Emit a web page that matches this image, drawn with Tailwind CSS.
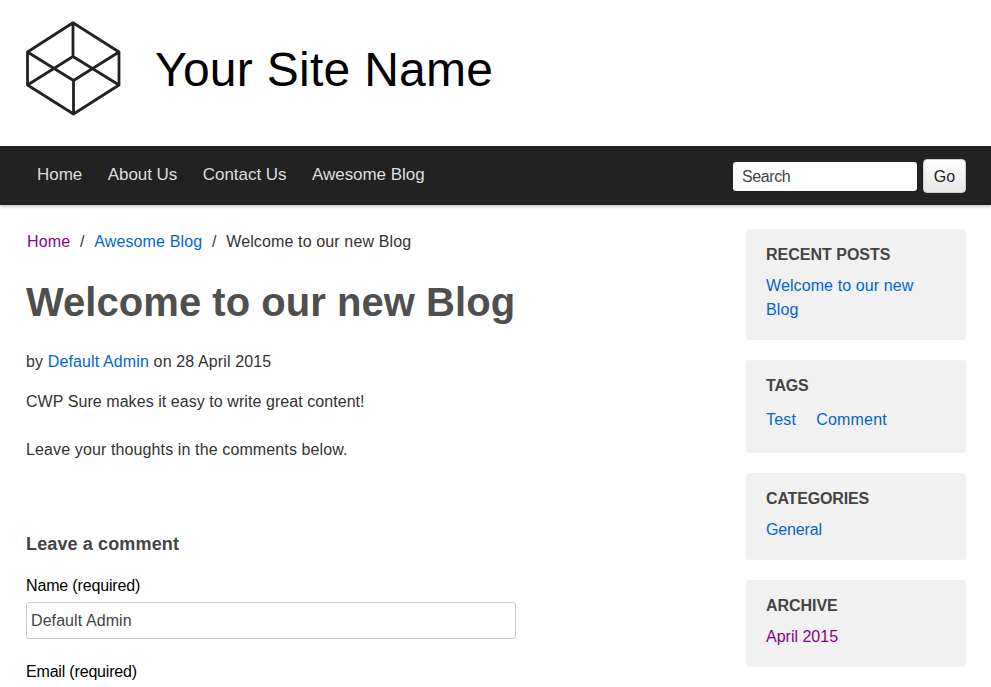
<!DOCTYPE html>
<html lang="en">
<head>
<meta charset="utf-8">
<title>Welcome to our new Blog</title>
<script src="https://cdn.jsdelivr.net/npm/@tailwindcss/browser@4"></script>
</head>
<body class="h-[687px] overflow-hidden bg-white font-['Liberation_Sans',Arial,sans-serif] text-base leading-6 text-[#333]">
<header class="flex h-[146px] items-start pl-[25px]">
  <svg class="mt-5 h-[97px] w-[97px] shrink-0" viewBox="0 0 97 97" fill="none" stroke="#222" stroke-width="2.8" stroke-linejoin="round">
    <path d="M48 2.800 94 32V65L48.500 94 2.500 65V32ZM48 3V36.500L2.500 65M48 36.500 94 65M2.500 32 48.500 60.500V94M48.500 60.500 94 32"/>
  </svg>
  <div class="ml-[33px] mt-10 text-[48px] leading-[60px] tracking-[0.28px] whitespace-nowrap text-black">Your Site Name</div>
</header>
<nav class="flex h-[59px] items-start bg-[#222] pr-[25px] pl-[37px] text-[#ddd] shadow-[0_2px_3px_rgba(0,0,0,0.2)]">
  <div class="flex gap-[25.500px] pt-[17px] text-[17px] leading-6 tracking-[-0.04px] whitespace-nowrap">
    <a>Home</a><a>About Us</a><a>Contact Us</a><a>Awesome Blog</a>
  </div>
  <form class="ml-auto flex items-start gap-1.5 pt-[13px]">
    <div class="mt-[3px] h-[29px] w-[184px] rounded-[3px] bg-white pl-[9px] leading-[29px] tracking-[-0.4px] text-[#444]">Search</div>
    <div class="h-[34px] w-[43px] rounded-[4px] border border-[#ccc] bg-linear-to-b from-white to-[#e6e6e6] text-center leading-[33px] text-[#222]">Go</div>
  </form>
</nav>
<div class="flex justify-between pr-[25px] pl-[26px]">
  <main class="w-[490px]">
    <div class="mt-[25px] flex whitespace-nowrap pl-px tracking-[0.13px]"><a class="text-[#808]">Home</a><span class="w-6 text-center">/</span><a class="text-[#0066cc]">Awesome Blog</a><span class="w-6 text-center">/</span><span>Welcome to our new Blog</span></div>
    <h1 class="mt-[23px] text-[40px] leading-[50px] font-bold tracking-[0.04px] whitespace-nowrap text-[#4f4f4f]">Welcome to our new Blog</h1>
    <p class="mt-[23px] tracking-[0.13px]">by <a class="text-[#0066cc]">Default Admin</a> on 28 April 2015</p>
    <p class="mt-4 tracking-[0.06px]">CWP Sure makes it easy to write great content!</p>
    <p class="mt-6 tracking-[0.12px]">Leave your thoughts in the comments below.</p>
    <h2 class="mt-[70px] text-lg leading-6 font-bold tracking-[0.13px] text-[#444]">Leave a comment</h2>
    <div class="mt-[18px] tracking-[-0.16px] text-black">Name (required)</div>
    <div class="mt-1 h-[37px] rounded-[3px] border border-[#ccc] pl-1 leading-[35px] tracking-[0.08px] text-[#444]">Default Admin</div>
    <div class="mt-[21px] tracking-[-0.18px] text-black">Email (required)</div>
  </main>
  <aside class="mt-6 flex w-[220px] flex-col gap-5">
    <section class="h-[111px] rounded-[4px] bg-[#f1f1f1] px-5 pt-[14px]"><h3 class="font-bold text-[#444]">RECENT POSTS</h3><a class="mt-[7px] block tracking-[0.1px] text-[#0066cc]">Welcome to our new Blog</a></section>
    <section class="h-[93px] rounded-[4px] bg-[#f1f1f1] px-5 pt-[14px]"><h3 class="font-bold tracking-[-0.2px] text-[#444]">TAGS</h3><div class="mt-[10px] flex gap-5 tracking-[0.2px] text-[#0066cc]"><a>Test</a><a>Comment</a></div></section>
    <section class="h-[87px] rounded-[4px] bg-[#f1f1f1] px-5 pt-[14px]"><h3 class="font-bold tracking-[-0.15px] text-[#444]">CATEGORIES</h3><a class="mt-[7px] block tracking-[-0.15px] text-[#0066cc]">General</a></section>
    <section class="h-[87px] rounded-[4px] bg-[#f1f1f1] px-5 pt-[14px]"><h3 class="font-bold tracking-[-0.05px] text-[#444]">ARCHIVE</h3><a class="mt-[7px] block text-[#808]">April 2015</a></section>
  </aside>
</div>
</body>
</html>
